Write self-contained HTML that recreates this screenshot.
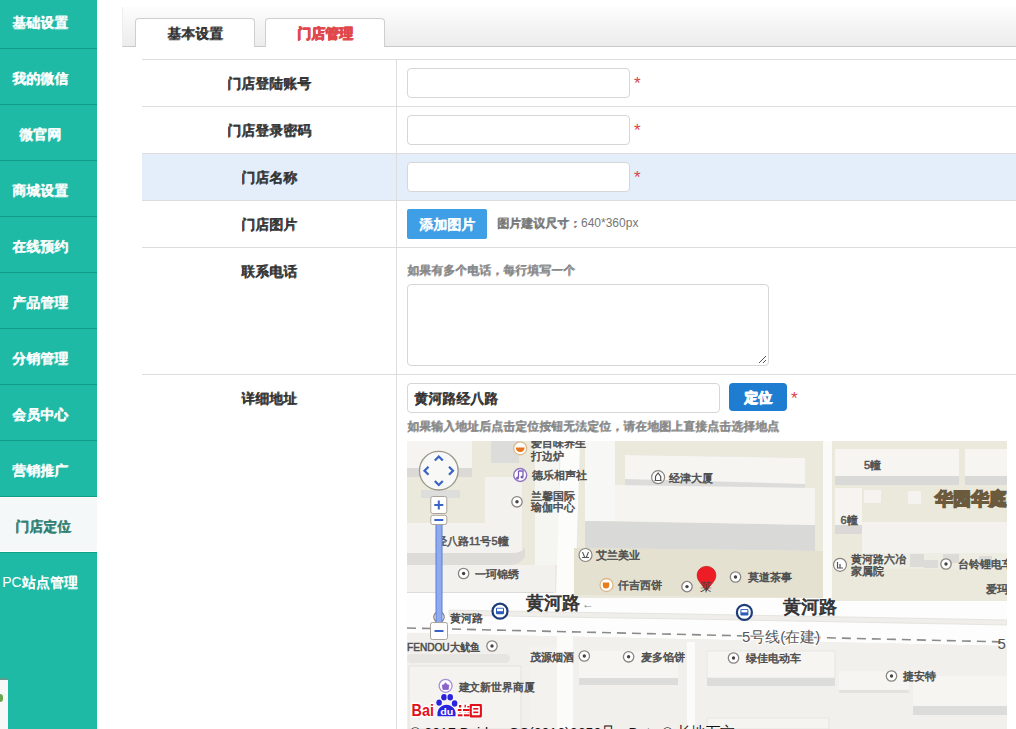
<!DOCTYPE html>
<html><head><meta charset="utf-8">
<style>
*{margin:0;padding:0;box-sizing:border-box}
html,body{width:1016px;height:729px;overflow:hidden;background:#fff;font-family:"Liberation Sans",sans-serif;color:#333}
.abs{position:absolute}
#side{position:absolute;left:0;top:0;width:97px;height:729px;background:#1fbaa6}
.si{position:absolute;left:0;width:97px;height:56px;border-bottom:1px solid #129c88}
.si span{position:absolute;left:0;width:80px;text-align:center;top:21px;font-size:14px;line-height:16px;color:#fff;white-space:nowrap}
.si.act{background:#f5f8f8;border-bottom:none}
.si.act span{color:#2b7d70}
#tabbar{position:absolute;left:122px;top:7px;width:894px;height:40px;background:linear-gradient(#fdfdfd,#ececec);border-bottom:1px solid #c9c9c9;border-left:1px solid #eee}
.tab{position:absolute;top:11px;width:120px;height:29px;background:#fff;border:1px solid #cfcfcf;border-bottom:none;border-radius:4px 4px 0 0;text-align:center;font-size:14px;line-height:28px;color:#333}
.tab.on{color:#e0474a;font-weight:bold}
.hl{position:absolute;left:142px;width:874px;height:1px;background:#ddd}
.vl{position:absolute;left:396px;width:1px;background:#ddd}
.lab{position:absolute;left:142px;width:254px;text-align:center;font-size:14px;line-height:16px;color:#333}
.inp{position:absolute;left:407px;height:30px;border:1px solid #d6d6d6;border-radius:4px;background:#fff}
.star{position:absolute;color:#d9434a;font-size:17px;line-height:17px}
.hint{position:absolute;font-size:12px;line-height:14px;color:#888;white-space:nowrap}
i.z{display:inline-block;width:1em;text-align:center;font-style:normal;text-shadow:0.6px 0 0 currentColor,0 0.6px 0 currentColor}
</style></head><body>
<div id="side">
  <div class="si" style="top:-7px"><span><i class="z">基</i><i class="z">础</i><i class="z">设</i><i class="z">置</i></span></div>
  <div class="si" style="top:49px"><span><i class="z">我</i><i class="z">的</i><i class="z">微</i><i class="z">信</i></span></div>
  <div class="si" style="top:105px"><span><i class="z">微</i><i class="z">官</i><i class="z">网</i></span></div>
  <div class="si" style="top:161px"><span><i class="z">商</i><i class="z">城</i><i class="z">设</i><i class="z">置</i></span></div>
  <div class="si" style="top:217px"><span><i class="z">在</i><i class="z">线</i><i class="z">预</i><i class="z">约</i></span></div>
  <div class="si" style="top:273px"><span><i class="z">产</i><i class="z">品</i><i class="z">管</i><i class="z">理</i></span></div>
  <div class="si" style="top:329px"><span><i class="z">分</i><i class="z">销</i><i class="z">管</i><i class="z">理</i></span></div>
  <div class="si" style="top:385px"><span><i class="z">会</i><i class="z">员</i><i class="z">中</i><i class="z">心</i></span></div>
  <div class="si" style="top:441px"><span><i class="z">营</i><i class="z">销</i><i class="z">推</i><i class="z">广</i></span></div>
  <div class="si act" style="top:497px;height:55px;border-top:1px solid #fff;border-bottom:1px solid #fff"><span style="top:20px;left:3px"><i class="z">门</i><i class="z">店</i><i class="z">定</i><i class="z">位</i></span></div>
  <div class="si" style="top:552px;height:177px;border-bottom:none;border-top:1px solid #0fa088"><span style="top:21px">PC<i class="z">站</i><i class="z">点</i><i class="z">管</i><i class="z">理</i></span></div>
</div>
<div class="abs" style="left:0;top:678px;width:8px;height:51px;background:#f7f8f8;border-top:2px solid #5f9c90"><div style="position:absolute;left:0;top:14px;width:3px;height:8px;background:#6aa84f;border-radius:0 3px 3px 0"></div></div>

<div id="tabbar">
  <div class="tab" style="left:12px"><i class="z">基</i><i class="z">本</i><i class="z">设</i><i class="z">置</i></div>
  <div class="tab on" style="left:142px"><i class="z">门</i><i class="z">店</i><i class="z">管</i><i class="z">理</i></div>
</div>

<!-- table -->
<div class="abs" style="left:142px;top:153px;width:874px;height:47px;background:#e3eefa"></div>
<div class="hl" style="top:59px"></div>
<div class="hl" style="top:106px"></div>
<div class="hl" style="top:153px"></div>
<div class="hl" style="top:200px"></div>
<div class="hl" style="top:247px"></div>
<div class="hl" style="top:374px"></div>
<div class="vl" style="top:59px;height:670px"></div>

<div class="lab" style="top:75px"><i class="z">门</i><i class="z">店</i><i class="z">登</i><i class="z">陆</i><i class="z">账</i><i class="z">号</i></div>
<div class="lab" style="top:122px"><i class="z">门</i><i class="z">店</i><i class="z">登</i><i class="z">录</i><i class="z">密</i><i class="z">码</i></div>
<div class="lab" style="top:169px"><i class="z">门</i><i class="z">店</i><i class="z">名</i><i class="z">称</i></div>
<div class="lab" style="top:216px"><i class="z">门</i><i class="z">店</i><i class="z">图</i><i class="z">片</i></div>
<div class="lab" style="top:263px"><i class="z">联</i><i class="z">系</i><i class="z">电</i><i class="z">话</i></div>
<div class="lab" style="top:390px"><i class="z">详</i><i class="z">细</i><i class="z">地</i><i class="z">址</i></div>

<div class="inp" style="top:68px;width:223px"></div><div class="star" style="left:634px;top:75px">*</div>
<div class="inp" style="top:115px;width:223px"></div><div class="star" style="left:634px;top:122px">*</div>
<div class="inp" style="top:162px;width:223px"></div><div class="star" style="left:634px;top:169px">*</div>

<div class="abs" style="left:407px;top:209px;width:80px;height:30px;background:#3e9fe6;border-radius:2px;color:#fff;font-size:14px;line-height:30px;text-align:center"><i class="z">添</i><i class="z">加</i><i class="z">图</i><i class="z">片</i></div>
<div class="hint" style="left:497px;top:216px;color:#777"><i class="z">图</i><i class="z">片</i><i class="z">建</i><i class="z">议</i><i class="z">尺</i><i class="z">寸</i><i class="z">：</i>640*360px</div>

<div class="hint" style="left:407px;top:263px"><i class="z">如</i><i class="z">果</i><i class="z">有</i><i class="z">多</i><i class="z">个</i><i class="z">电</i><i class="z">话</i><i class="z">，</i><i class="z">每</i><i class="z">行</i><i class="z">填</i><i class="z">写</i><i class="z">一</i><i class="z">个</i></div>
<div class="inp" style="top:284px;width:362px;height:82px"><svg width="10" height="10" style="position:absolute;right:1px;bottom:1px"><path d="M9 2 L2 9 M9 6 L6 9" stroke="#555" stroke-width="1"/></svg></div>

<div class="inp" style="top:383px;width:313px;height:30px;font-size:14px;line-height:28px;padding-left:6px;color:#333"><i class="z">黄</i><i class="z">河</i><i class="z">路</i><i class="z">经</i><i class="z">八</i><i class="z">路</i></div>
<div class="abs" style="left:729px;top:383px;width:58px;height:28px;background:#1f7dd1;border-radius:4px;color:#fff;font-size:14px;font-weight:bold;line-height:28px;text-align:center"><i class="z">定</i><i class="z">位</i></div>
<div class="star" style="left:791px;top:390px">*</div>
<div class="hint" style="left:407px;top:419px"><i class="z">如</i><i class="z">果</i><i class="z">输</i><i class="z">入</i><i class="z">地</i><i class="z">址</i><i class="z">后</i><i class="z">点</i><i class="z">击</i><i class="z">定</i><i class="z">位</i><i class="z">按</i><i class="z">钮</i><i class="z">无</i><i class="z">法</i><i class="z">定</i><i class="z">位</i><i class="z">，</i><i class="z">请</i><i class="z">在</i><i class="z">地</i><i class="z">图</i><i class="z">上</i><i class="z">直</i><i class="z">接</i><i class="z">点</i><i class="z">击</i><i class="z">选</i><i class="z">择</i><i class="z">地</i><i class="z">点</i></div>

<div id="map" class="abs" style="left:407px;top:441px;width:600px;height:288px;background:#ebe9dd;overflow:hidden">
<svg width="600" height="288" viewBox="0 0 600 288" style="position:absolute;left:0;top:0;font-family:'Liberation Sans',sans-serif">
<defs>
<g id="dot"><circle r="5.2" fill="#fff" stroke="#8a8580" stroke-width="1.3"/><circle r="1.7" fill="#444"/></g>
<g id="bus"><circle r="7.5" fill="#fff" stroke="#1e3c78" stroke-width="2.2"/><rect x="-4" y="-3.5" width="8" height="6.5" rx="1.2" fill="#2a5cb8"/><rect x="-3" y="-2.5" width="6" height="2.5" fill="#fff"/></g>
</defs>
<!-- north base beige -->
<rect x="0" y="0" width="600" height="160" fill="#ebe9dc"/>
<!-- left column -->
<rect x="0" y="0" width="65" height="27" fill="#f5f4f0"/>
<rect x="0" y="27" width="65" height="9" fill="#dbdad7"/>
<rect x="84" y="0" width="28" height="22" fill="#dcdcda"/>
<rect x="78" y="36" width="37" height="76" fill="#f3f2ee"/>
<path d="M0 82 H115 V102 Q115 112 105 112 H0 Z" fill="#f3f2ee"/>
<path d="M0 112 H105 Q115 112 118 106 V116 Q112 124 104 124 H0 Z" fill="#dddcd8"/>
<rect x="0" y="124" width="148" height="28" fill="#f2f1ed"/>
<rect x="128" y="0" width="24" height="124" fill="#f5f5f2"/>
<!-- main vertical road -->
<polygon points="154,0 173,0 168,156 149,156" fill="#fcfcfb"/>
<!-- middle block -->
<rect x="178" y="0" width="30" height="80" fill="#f7f7f5"/>
<polygon points="218,14 398,17 398,49 218,46" fill="#dcdcda"/>
<polygon points="218,14 398,17 398,43 218,38" fill="#f6f5f2"/>
<polygon points="178,80 408,84 408,110 178,107" fill="#d9d9d8"/>
<polygon points="208,44 408,47 408,84 208,80" fill="#f5f4f1"/>
<polygon points="167,107 416,110 416,157 167,154" fill="#e4e1d1"/>
<!-- vertical road right -->
<rect x="416" y="0" width="9" height="160" fill="#fafaf8"/>
<!-- right block -->
<rect x="428" y="8" width="124" height="27" fill="#f6f5f2"/>
<rect x="428" y="35" width="124" height="9" fill="#d9d9d8"/>
<rect x="558" y="8" width="42" height="27" fill="#f6f5f2"/>
<rect x="558" y="35" width="42" height="9" fill="#d9d9d8"/>
<rect x="428" y="47" width="27" height="37" fill="#f5f4f1"/>
<rect x="428" y="84" width="27" height="9" fill="#dad9d7"/>
<rect x="457" y="49" width="17" height="13" fill="#f4f3ef"/>
<rect x="501" y="50" width="13" height="13" fill="#f4f3ef"/>
<rect x="455" y="81" width="145" height="31" fill="#f3f2ee"/>
<rect x="455" y="112" width="145" height="16" fill="#eeede4"/>
<rect x="503" y="113" width="14" height="13" fill="#dcdbd8"/>
<rect x="517" y="119" width="14" height="8" fill="#dcdbd8"/>
<rect x="536" y="113" width="16" height="9" fill="#dcdbd8"/>
<rect x="572" y="115" width="13" height="13" fill="#dcdbd8"/>
<!-- road -->
<polygon points="0,151 147,151 147,152 167,152 167,157 416,157 425,160 600,160 600,205 0,192" fill="#fdfdfd"/>
<line x1="0" y1="151.5" x2="147" y2="151.5" stroke="#dcdcd8" stroke-width="1"/>
<polygon points="42,169 147,171 280,173 600,179 600,184 280,178 147,176 42,174" fill="#efeeea" stroke="#e0dfdb" stroke-width="0.8"/>
<!-- south base -->
<polygon points="0,192 600,205 600,288 0,288" fill="#f1f0ec"/>
<rect x="150" y="195" width="16" height="93" fill="#fbfbfa"/>
<rect x="280" y="201" width="8" height="87" fill="#fbfbfa"/>
<rect x="0" y="213" width="103" height="9" rx="4.5" fill="#e6e5e1"/>
<rect x="2" y="225" width="112" height="63" fill="#f4f3f0" stroke="#e3e2de" stroke-width="1"/>
<rect x="123" y="205" width="27" height="83" fill="#f3f2ee"/>
<rect x="172" y="210" width="99" height="27" fill="#f6f5f2"/>
<rect x="172" y="237" width="99" height="7" fill="#dcdcda"/>
<rect x="300" y="210" width="128" height="27" fill="#f6f5f2" stroke="#e4e3df" stroke-width="0.8"/>
<rect x="300" y="237" width="128" height="8" fill="#dcdcda"/>
<rect x="432" y="230" width="70" height="19" fill="#f6f5f2"/>
<rect x="432" y="249" width="70" height="3" fill="#e3e2de"/>
<rect x="506" y="235" width="94" height="30" fill="#f6f5f2"/>
<rect x="506" y="265" width="94" height="9" fill="#dcdcda"/>
<rect x="300" y="277" width="122" height="11" fill="#f5f4f1" stroke="#e4e3df" stroke-width="0.8"/>
<!-- subway dashed -->
<line x1="0" y1="187" x2="600" y2="201" stroke="#8a8a88" stroke-width="1.6" stroke-dasharray="9,6"/>
<g font-size="11" fill="#4d4d4d" stroke="#4d4d4d" stroke-width="0.5" dominant-baseline="central">
<text x="124" y="2" textLength="55.0" lengthAdjust="spacing">爱目味养生</text>
<text x="124" y="14.5" textLength="33.0" lengthAdjust="spacing">打边炉</text>
<text x="124.5" y="34" textLength="55.0" lengthAdjust="spacing">德乐相声社</text>
<text x="124" y="54.6" textLength="44.0" lengthAdjust="spacing">兰馨国际</text>
<text x="124" y="66.4" textLength="44.0" lengthAdjust="spacing">瑜伽中心</text>
<text x="29" y="100.4" fill="#6a6a6a" textLength="72.5" lengthAdjust="spacing">经八路11号5幢</text>
<text x="68" y="133" textLength="44.0" lengthAdjust="spacing">一珂锦绣</text>
<text x="262" y="36.7" textLength="44.0" lengthAdjust="spacing">经津大厦</text>
<text x="457" y="24" fill="#707070" textLength="17.1" lengthAdjust="spacing">5幢</text>
<text x="433.6" y="79" fill="#707070" textLength="17.1" lengthAdjust="spacing">6幢</text>
<text x="189.4" y="114" textLength="44.0" lengthAdjust="spacing">艾兰美业</text>
<text x="210.7" y="144" textLength="44.0" lengthAdjust="spacing">仟吉西饼</text>
<text x="341" y="136" textLength="44.0" lengthAdjust="spacing">莫道茶事</text>
<text x="444" y="118" textLength="55.0" lengthAdjust="spacing">黄河路六冶</text>
<text x="444" y="130" textLength="33.0" lengthAdjust="spacing">家属院</text>
<text x="551" y="123" textLength="55.0" lengthAdjust="spacing">台铃锂电车</text>
<text x="579" y="148" textLength="22.0" lengthAdjust="spacing">爱玛</text>
<text x="43.4" y="176.5" textLength="33.0" lengthAdjust="spacing">黄河路</text>
<text x="0" y="205.7" textLength="73" lengthAdjust="spacingAndGlyphs">FENDOU大鱿鱼</text>
<text x="122.8" y="215.5" textLength="44.0" lengthAdjust="spacing">茂源烟酒</text>
<text x="233.7" y="216" textLength="44.0" lengthAdjust="spacing">麦多馅饼</text>
<text x="338.6" y="217" textLength="55.0" lengthAdjust="spacing">绿佳电动车</text>
<text x="495.8" y="235" textLength="33.0" lengthAdjust="spacing">捷安特</text>
<text x="51.5" y="245.5" textLength="76" lengthAdjust="spacingAndGlyphs">建文新世界商厦</text>
</g>
<text x="528" y="58.3" font-size="18" font-weight="bold" fill="#6b5a3c" stroke="#6b5a3c" stroke-width="1.4" dominant-baseline="central" textLength="72.0" lengthAdjust="spacing">华园华庭</text>
<text x="118.8" y="162.4" font-size="18" fill="#333" stroke="#333" stroke-width="0.8" dominant-baseline="central" textLength="54.0" lengthAdjust="spacing">黄河路</text>
<text x="175" y="162.5" font-size="12" fill="#888" dominant-baseline="central">←</text>
<text x="375.7" y="166.4" font-size="18" fill="#333" stroke="#333" stroke-width="0.8" dominant-baseline="central" textLength="54.0" lengthAdjust="spacing">黄河路</text>
<text x="335" y="195.6" font-size="15" fill="#555" stroke="#fff" stroke-width="2" paint-order="stroke" dominant-baseline="central" textLength="78.3" lengthAdjust="spacing">5号线(在建)</text>
<text x="590.6" y="202.6" font-size="15" fill="#555" dominant-baseline="central">5</text>
<!-- icons -->
<use href="#dot" x="110" y="60.8"/>
<use href="#dot" x="56.6" y="132.5"/>
<use href="#dot" x="280" y="145.6"/>
<use href="#dot" x="328.5" y="136"/>
<use href="#dot" x="539" y="123"/>
<use href="#dot" x="85" y="205"/>
<use href="#dot" x="177.3" y="215"/>
<use href="#dot" x="221.6" y="215.8"/>
<use href="#dot" x="326.5" y="217"/>
<use href="#dot" x="484.5" y="235"/>
<use href="#dot" x="32" y="176"/>
<use href="#bus" x="93" y="170.2"/>
<use href="#bus" x="337.4" y="171.4"/>
<!-- bowl -->
<circle cx="113.2" cy="7.3" r="6.5" fill="#fff" stroke="#d9b98c" stroke-width="1.2"/>
<path d="M108.7 6.5 H117.7 Q117 11 113.2 11 Q109.4 11 108.7 6.5 Z" fill="#e8731a"/>
<!-- music -->
<circle cx="113.2" cy="34" r="6.5" fill="#fff" stroke="#8f72c2" stroke-width="1.4"/>
<path d="M111.5 30 V36.5 M111.5 30 H116 V35.5" stroke="#7b5cb8" stroke-width="1.3" fill="none"/>
<circle cx="110.5" cy="37" r="1.5" fill="#7b5cb8"/><circle cx="115" cy="36" r="1.5" fill="#7b5cb8"/>
<!-- building icon -->
<circle cx="251.1" cy="36.2" r="6.5" fill="#fff" stroke="#8a8580" stroke-width="1.2"/>
<path d="M247.5 39.5 H254.7 M248.5 39.5 V35.5 L251.1 32 L253.7 35.5 V39.5" stroke="#555" stroke-width="1.2" fill="none"/>
<!-- ailan icon -->
<circle cx="178.5" cy="114" r="6.5" fill="#fff" stroke="#8a8580" stroke-width="1.2"/>
<path d="M175.5 111 L178 117 M181.5 111 L179 117 M175 116.5 H182" stroke="#555" stroke-width="1.1" fill="none"/>
<!-- coffee -->
<circle cx="199.5" cy="144" r="6.5" fill="#fff" stroke="#dbb88a" stroke-width="1.3"/>
<path d="M195.8 141.5 H202.2 V144.5 Q202.2 147.5 199 147.5 Q195.8 147.5 195.8 144.5 Z" fill="#e77d1a"/>
<!-- family icon -->
<circle cx="433" cy="123.8" r="6.5" fill="#fff" stroke="#8a8580" stroke-width="1.2"/>
<path d="M430.5 121 V127 H436 M433 123 V127" stroke="#555" stroke-width="1.2" fill="none"/>
<!-- shop icon -->
<circle cx="38.6" cy="244.8" r="6.5" fill="#fff" stroke="#a78fd1" stroke-width="1.3"/>
<path d="M35.3 244 H41.9 L41.2 248.5 H36 Z M37 244 Q38.6 240 40.2 244" fill="#8a63c8" stroke="#8a63c8" stroke-width="0.8"/>
<!-- pin -->
<path d="M299.5 149.8 C296 144 290.2 140 290.2 134.5 C290.2 129 294.3 125.4 299.5 125.4 C304.7 125.4 308.8 129 308.8 134.5 C308.8 140 303 144 299.5 149.8 Z" fill="#ee1c25" stroke="#c8141b" stroke-width="0.8"/>
<text x="293" y="146" font-size="12" fill="#444" dominant-baseline="central" textLength="12.0" lengthAdjust="spacing">莱</text>
<!-- nav control -->
<rect x="14" y="49" width="39" height="8" fill="#dcdcdc" opacity="0.9"/>
<circle cx="31.8" cy="29.7" r="19.3" fill="#f8f8f6" stroke="#9d978b" stroke-width="1.3"/>
<path d="M27.8 19.5 L31.8 15.5 L35.8 19.5 M27.8 40 L31.8 44 L35.8 40 M21.5 25.7 L17.5 29.7 L21.5 33.7 M42 25.7 L46 29.7 L42 33.7" stroke="#3a63c6" stroke-width="2.2" fill="none"/>
<rect x="23.8" y="55.5" width="16" height="17" rx="2" fill="#fff" stroke="#a9a49b" stroke-width="1"/>
<path d="M31.8 59.5 V68.5 M27.3 64 H36.3" stroke="#3a63c6" stroke-width="2"/>
<rect x="29" y="83" width="6" height="99" fill="#8eaaf0" stroke="#5d7fd0" stroke-width="1"/>
<rect x="23.8" y="74.3" width="16" height="9.2" rx="2" fill="#fff" stroke="#a9a49b" stroke-width="1"/>
<path d="M27.3 79 H36.3" stroke="#3a63c6" stroke-width="2"/>
<rect x="23.5" y="181.5" width="17" height="17" rx="2" fill="#fff" stroke="#a9a49b" stroke-width="1"/>
<path d="M27.5 190 H36.5" stroke="#3a63c6" stroke-width="2"/>
<!-- baidu logo -->
<g stroke="#fff" stroke-width="3" paint-order="stroke" stroke-linejoin="round">
<text x="4.6" y="275.3" font-size="17" font-weight="bold" fill="#e10f1a" textLength="22.4" lengthAdjust="spacingAndGlyphs">Bai</text>
<g fill="#e10f1a">
<rect x="52" y="264" width="2.2" height="11"/><rect x="50.8" y="268" width="5" height="2"/><rect x="50.8" y="273.3" width="5.5" height="2"/>
<rect x="57.5" y="263.8" width="2" height="10"/><rect x="60.3" y="265" width="2" height="9"/><rect x="56" y="268" width="6.5" height="2"/><rect x="57" y="273.3" width="5.5" height="2"/>
<rect x="63.8" y="264" width="10" height="11.3" fill="none" stroke="#e10f1a" stroke-width="2.2"/>
<rect x="66.3" y="267" width="5" height="1.6"/><rect x="66.3" y="270.5" width="5" height="1.6"/>
</g>
<g fill="#2b24dd" stroke-width="1.5"><ellipse cx="32.1" cy="261.6" rx="2.8" ry="3.2"/><ellipse cx="37" cy="256.3" rx="2.8" ry="3.2"/><ellipse cx="43.2" cy="256.3" rx="2.8" ry="3.2"/><ellipse cx="47.6" cy="262.5" rx="2.8" ry="3.2"/>
<path d="M30.5 275.3 Q29.5 268 35 265 Q39.5 262.5 44 265 Q49.5 268 48.5 275.3 Z"/></g>
</g>
<text x="33.2" y="273.5" font-size="9.5" font-weight="bold" fill="#fff" textLength="13" lengthAdjust="spacingAndGlyphs">du</text>
<text x="3" y="297" font-size="15.5" fill="#111" dominant-baseline="alphabetic" textLength="325" lengthAdjust="spacingAndGlyphs">© 2017 Baidu - GS(2016)2650号 - Data © 长地万方</text>
</svg>
</div>
</body></html>
